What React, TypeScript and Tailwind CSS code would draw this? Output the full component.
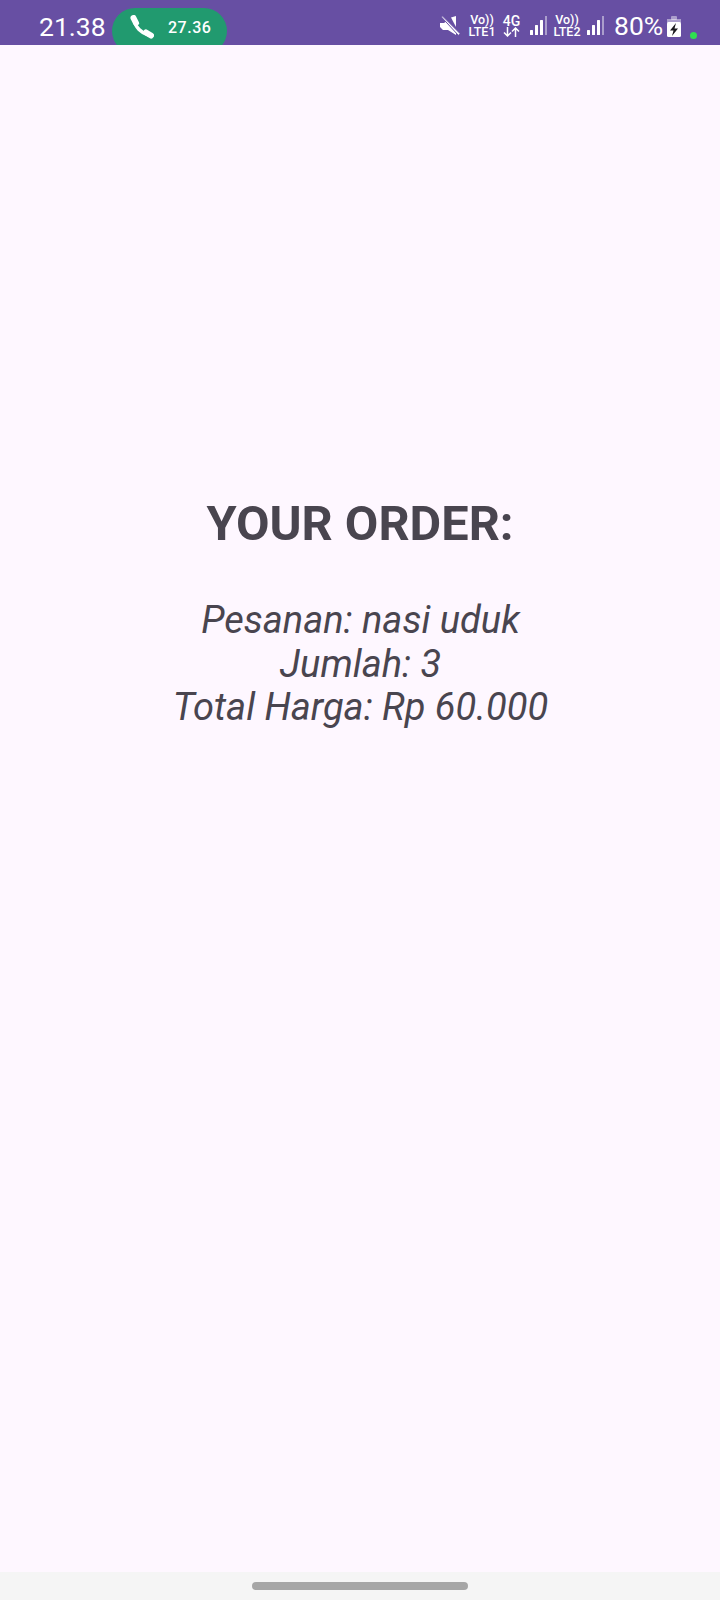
import React from 'react';

const SignalBars: React.FC<{ className?: string }> = ({ className }) => (
  <svg width="18" height="20" viewBox="0 0 18 20" className={`shrink-0 ${className ?? ''}`}>
    <rect x="0" y="14" width="3" height="5" rx="0.5" fill="#fff" />
    <rect x="5" y="9" width="3" height="10" rx="0.5" fill="#fff" />
    <rect x="10" y="4" width="3" height="15" rx="0.5" fill="#fff" />
    <rect x="15" y="0" width="2" height="19" fill="#fff" opacity="0.45" />
  </svg>
);

const VoLte: React.FC<{ line: string; className?: string }> = ({ line, className }) => (
  <div className={`flex flex-col items-center w-[26px] shrink-0 text-[12.5px] leading-[12px] font-medium text-white ${className ?? ''}`}>
    <span>Vo))</span>
    <span>{line}</span>
  </div>
);

export default function App() {
  return (
    <div className="flex flex-col w-[720px] h-[1600px] bg-[#fef7ff] overflow-hidden font-['Roboto',sans-serif]">
      <div className="flex items-start h-[45px] shrink-0 overflow-hidden bg-[#674fa3] text-white">
        <span className="ml-[39px] mt-[11px] w-[67px] text-[26.500px] leading-[32px] font-normal">21.38</span>
        <div className="flex items-center ml-[6px] mt-[8px] w-[115px] h-[46px] shrink-0 rounded-full bg-[#219a6f]">
          <svg width="24" height="24" viewBox="0 0 24 24" className="ml-[18px] mb-[8px]" fill="none" stroke="#fff" strokeLinecap="round">
            <path d="M4.500 6C5.500 12 11 18 18.500 20" strokeWidth="3.500" />
            <path d="M3.500 3 6 8" strokeWidth="6" />
            <path d="M16 17.500 21 20.500" strokeWidth="6" />
          </svg>
          <span className="ml-[14px] mb-[7px] text-[16px] leading-[20px] font-medium tracking-[0.5px]">27.36</span>
        </div>
        <div className="flex items-center ml-auto mr-[23px] h-[45px] pt-[7px]">
          <svg width="20" height="20" viewBox="0 0 20 20" className="shrink-0" fill="#fff">
            <path d="M0 7h4l3-2 10 10-1 1.500V19l-8-5H3l-3-3z" />
            <path d="M11 1.500 16 0v11z" />
            <path d="M1 0.500 2.500 0 20 17.500 18.500 19.500z" stroke="#674fa3" strokeWidth="1" />
          </svg>
          <VoLte line="LTE1" className="ml-[9px]" />
          <div className="flex flex-col items-center ml-[8px] w-[17px] shrink-0 text-[14px] leading-[12px] font-medium">
            <span>4G</span>
            <svg width="17" height="10" viewBox="0 0 17 10" fill="none" stroke="#fff" strokeWidth="1.500">
              <path d="M4.500 0v9M1 5.500 4.500 9 8 5.500" />
              <path d="M12.500 10V1M9 4.500 12.500 1 16 4.500" />
            </svg>
          </div>
          <SignalBars className="ml-[10px]" />
          <VoLte line="LTE2" className="ml-[6px]" />
          <SignalBars className="ml-[7px]" />
          <span className="ml-[9px] w-[49px] shrink-0 text-[26.500px] leading-[32px] font-normal">80%</span>
          <svg width="14" height="21" viewBox="0 0 14 21" className="ml-[4px] shrink-0">
            <rect x="4" y="0" width="6" height="4" rx="1" fill="#fff" opacity="0.45" />
            <path d="M0 3h14v4H0z" fill="#fff" opacity="0.45" />
            <rect x="0" y="6" width="14" height="15" rx="1.500" fill="#fff" />
            <path d="M9 7 3 14.500h3.500L5 20l6-7.500H7.500z" fill="#1c1b1f" />
          </svg>
          <div className="ml-[9px] mt-[18px] w-[7px] h-[7px] shrink-0 rounded-full bg-[#2fe04f]" />
        </div>
      </div>

      <main className="flex flex-1 flex-col items-center pt-[450px] text-[#49454f]">
        <h1 className="text-[48.700px] leading-[58px] font-bold">YOUR ORDER:</h1>
        <p className="mt-[46px] pl-[1px] text-[38px] leading-[43.500px] italic font-normal text-center">
          Pesanan: nasi uduk
          <br />
          Jumlah: 3
          <br />
          Total Harga: Rp 60.000
        </p>
      </main>

      <div className="flex items-center justify-center h-[28px] shrink-0 bg-[#f5f5f5]">
        <div className="w-[216px] h-[8px] rounded-full bg-[#a6a6a6]" />
      </div>
    </div>
  );
}
